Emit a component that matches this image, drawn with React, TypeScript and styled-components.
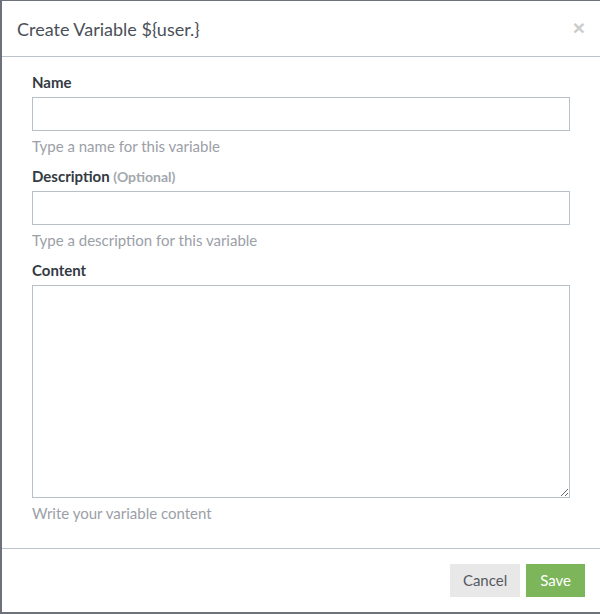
import React from "react";
import styled, { createGlobalStyle } from "styled-components";

const Global = createGlobalStyle`
  html, body { margin: 0; padding: 0; }
  body {
    background: #6d7179;
    font-family: "Lato", "Liberation Sans", sans-serif;
    overflow: hidden;
  }
  * { box-sizing: border-box; }
`;

const Backdrop = styled.div`
  width: 600px;
  height: 614px;
  padding: 1px 0 0 2px;
`;

const Modal = styled.div`
  width: 598px;
  height: 611px;
  background: #fff;
  display: flex;
  flex-direction: column;
`;

const Header = styled.div`
  height: 56px;
  padding: 16px 15px 0 15px;
  border-bottom: 1px solid #b8c3cd;
  display: flex;
  justify-content: space-between;
  align-items: flex-start;
`;

const Title = styled.h4`
  margin: 0;
  font-size: 18px;
  line-height: 24px;
  font-weight: 400;
  color: #4b5058;
`;

const Close = styled.button`
  border: 0;
  background: transparent;
  padding: 0;
  margin: 0;
  font-family: "Liberation Sans", sans-serif;
  font-size: 21px;
  line-height: 21px;
  font-weight: 700;
  color: #cccccc;
  cursor: pointer;
`;

const Body = styled.div`
  flex: 1;
  padding: 15px 30px 24px 30px;
`;

const Group = styled.div<{ $last?: boolean }>`
  margin-bottom: ${(p) => (p.$last ? 0 : 10)}px;
`;

const Label = styled.label`
  display: block;
  height: 20px;
  font-size: 15px;
  line-height: 20px;
  font-weight: 700;
  color: #333a43;
  margin-bottom: 5px;
`;

const Optional = styled.span`
  font-size: 14px;
  font-weight: 700;
  color: #a3a8ae;
`;

const Input = styled.input`
  display: block;
  width: 100%;
  height: 34px;
  border: 1px solid #b7bfc9;
  border-radius: 0;
  padding: 6px 12px;
  font-family: inherit;
  font-size: 14px;
  outline: none;
`;

const TextArea = styled.textarea`
  display: block;
  width: 100%;
  height: 213px;
  border: 1px solid #b7bfc9;
  border-radius: 0;
  padding: 6px 12px;
  font-family: inherit;
  font-size: 14px;
  outline: none;
  resize: vertical;
`;

const Help = styled.div`
  margin-top: 5px;
  font-size: 15px;
  line-height: 20px;
  color: #9ba0a7;
`;

const Footer = styled.div`
  border-top: 1px solid #b8c3cd;
  padding: 15px;
  display: flex;
  justify-content: flex-end;
  gap: 6px;
`;

const Button = styled.button<{ $primary?: boolean }>`
  height: 33px;
  border: 0;
  border-radius: 0;
  padding: 0 ${(p) => (p.$primary ? 14 : 13)}px;
  font-family: inherit;
  font-size: 15px;
  line-height: 33px;
  background: ${(p) => (p.$primary ? "#7db55a" : "#e8e8e8")};
  color: ${(p) => (p.$primary ? "#ffffff" : "#555a60")};
  cursor: pointer;
`;

export default function App() {
  return (
    <>
      <Global />
      <Backdrop>
        <Modal>
          <Header>
            <Title>Create Variable ${"{"}user.{"}"}</Title>
            <Close aria-label="Close">×</Close>
          </Header>
          <Body>
            <Group>
              <Label>Name</Label>
              <Input />
              <Help>Type a name for this variable</Help>
            </Group>
            <Group>
              <Label>
                Description <Optional>(Optional)</Optional>
              </Label>
              <Input />
              <Help>Type a description for this variable</Help>
            </Group>
            <Group $last>
              <Label>Content</Label>
              <TextArea />
              <Help>Write your variable content</Help>
            </Group>
          </Body>
          <Footer>
            <Button>Cancel</Button>
            <Button $primary>Save</Button>
          </Footer>
        </Modal>
      </Backdrop>
    </>
  );
}
